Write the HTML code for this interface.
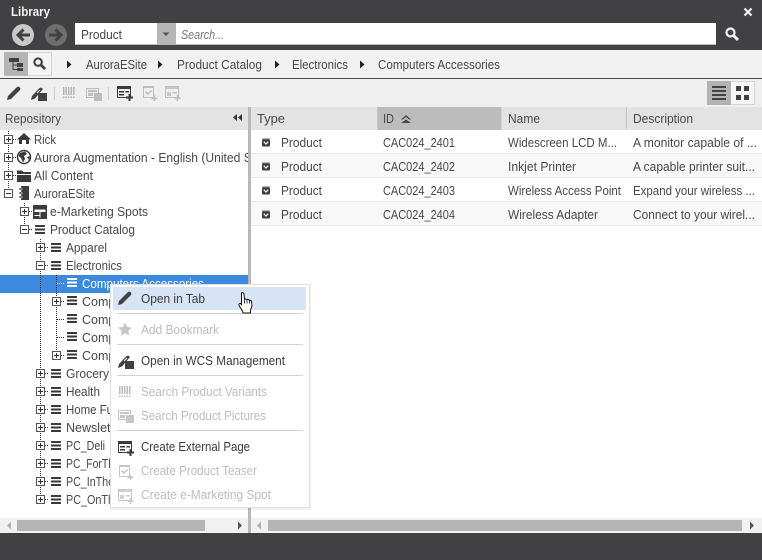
<!DOCTYPE html>
<html><head><meta charset="utf-8"><title>Library</title>
<style>
html,body{margin:0;padding:0;width:762px;height:560px;overflow:hidden;background:#414042}
svg{display:block}
text{font-family:"Liberation Sans",sans-serif;font-size:12.500px;fill:#484848}
.m{fill:#3c3c3c}.d{fill:#bdbdbd}
</style></head><body>
<svg width="762" height="560" viewBox="0 0 762 560" xmlns="http://www.w3.org/2000/svg">
<defs>
<clipPath id="tc"><rect x="0" y="130" width="248" height="388"/></clipPath>
<symbol id="pen" viewBox="0 0 14 14" overflow="visible"><path d="M0 14 L1 10 L9.500 1.500 Q11 0 12.500 1.200 L13 1.800 Q14 3 12.500 4.500 L4 13 Z" fill="currentColor"/></symbol>
<symbol id="penbox" viewBox="0 0 16 16" overflow="visible"><path d="M0 15 L1 11 L8 3.500 Q9.500 2 11 3 L12 4 L4 13.500 Z" fill="currentColor"/><rect x="7" y="8" width="9" height="8" fill="currentColor"/><path d="M6 8 L9 5" stroke="#fff" stroke-width="1"/></symbol>
<symbol id="bars" viewBox="0 0 10 9" overflow="visible"><path d="M0 0h10v2H0zM0 3.500h10v2H0zM0 7h10v2H0z" fill="currentColor"/></symbol>
<symbol id="plus" viewBox="0 0 9 9" overflow="visible"><rect x=".5" y=".5" width="8" height="8" fill="#fff" stroke="#555"/><path d="M2 4.500h5M4.500 2v5" stroke="#333"/></symbol>
<symbol id="minus" viewBox="0 0 9 9" overflow="visible"><rect x=".5" y=".5" width="8" height="8" fill="#fff" stroke="#555"/><path d="M2 4.500h5" stroke="#333"/></symbol>
<symbol id="barcode" viewBox="0 0 13 12" overflow="visible"><path d="M0 0h1.500v8H0zM2.500 0H4v8H2.500zM5 0h1.500v8H5zM7.500 0H9v8H7.500zM10 0h1.500v8H10zM0 9.500h1.500V11H0zM2.500 9.500H4V11H2.500zM5 9.500h1.500V11H5zM7.500 9.500H9V11H7.500zM10 9.500h1.500V11H10z" fill="currentColor"/></symbol>
<symbol id="pics" viewBox="0 0 16 14" overflow="visible"><path d="M.5 1.500h12v9H.5z" fill="none" stroke="currentColor"/><path d="M2 3h9v2H2zM2 6h5v3H2z" fill="currentColor"/><rect x="8" y="6" width="8" height="8" fill="currentColor"/></symbol>
<symbol id="page" viewBox="0 0 16 16" overflow="visible"><path d="M.5 2.500h13v10H.5z" fill="none" stroke="currentColor"/><path d="M0 1h14v3H0zM2 6h5v1.500H2zM2 9h5v1.500H2zM8.500 6H12v1.500H8.500z" fill="currentColor"/><path d="M9 12.500h7M12.500 9v7" stroke="currentColor" stroke-width="2"/></symbol>
<symbol id="teaser" viewBox="0 0 16 16" overflow="visible"><path d="M1.500 1.500h10v11h-10z" fill="none" stroke="currentColor"/><path d="M2 1h9v2H2z" fill="currentColor"/><path d="M3.500 6.500l2.500 2.500 3.500-3.500" fill="none" stroke="currentColor" stroke-width="1.500"/><path d="M9.500 13.500h6M12.500 10.500v5.500" stroke="currentColor" stroke-width="1.500"/></symbol>
<symbol id="spot" viewBox="0 0 16 16" overflow="visible"><path d="M.5 1.500h13v11H.5z" fill="none" stroke="currentColor"/><path d="M0 1h14v3H0zM2 7h4v4H2zM7.500 7H12v1.500H7.500z" fill="currentColor" opacity=".8"/><path d="M9.500 13h6M12.500 10v6" stroke="currentColor" stroke-width="1.500"/></symbol>
<symbol id="prod" viewBox="0 0 8 8" overflow="visible"><rect x="0" y="1" width="8" height="7" rx="1" fill="#3f3f3f"/><rect x="0" y="0" width="8" height="1" fill="#777"/><path d="M1.700 3.200 L4 5.500 L6.300 3.200" fill="none" stroke="#fff" stroke-width="1.200"/></symbol>
<symbol id="mag" viewBox="0 0 14 14" overflow="visible"><circle cx="5.500" cy="5.500" r="4" fill="none" stroke="currentColor" stroke-width="2.200"/><path d="M8.500 8.500 L13 13" stroke="currentColor" stroke-width="3"/></symbol>
</defs>

<!-- title bar -->
<rect width="762" height="560" fill="#414042"/>
<text x="11" y="16" style="font-weight:bold;fill:#f4f4f4" textLength="39" lengthAdjust="spacingAndGlyphs">Library</text>
<path d="M744.500 8.500 L751.500 15.500 M751.500 8.500 L744.500 15.500" stroke="#f2f2f2" stroke-width="2.200"/>
<circle cx="23" cy="35" r="11" fill="#c9c9c9"/>
<path d="M30 35H18M23.500 29.500 L18 35 L23.500 40.500" fill="none" stroke="#414042" stroke-width="3"/>
<circle cx="56" cy="35" r="11" fill="#6e6e6e"/>
<path d="M49 35H61M55.500 29.500 L61 35 L55.500 40.500" fill="none" stroke="#414042" stroke-width="3"/>
<rect x="75" y="23" width="641" height="22" fill="#bdbdbd"/>
<rect x="75" y="23" width="641" height="21" fill="#fff"/>
<rect x="157" y="23" width="19" height="22" fill="#b5b5b5"/>
<path d="M162.500 32.500h7l-3.500 3.500z" fill="#555"/>
<text x="81" y="39" textLength="41" lengthAdjust="spacingAndGlyphs">Product</text>
<text x="181" y="39" style="font-style:italic;fill:#777" textLength="43" lengthAdjust="spacingAndGlyphs">Search...</text>
<use href="#mag" x="725" y="27" width="14" height="14" color="#f2f2f2"/>

<!-- breadcrumb -->
<rect y="50" width="762" height="28" fill="#f1f1f1"/>
<rect y="78" width="762" height="1" fill="#4a4a4a"/>
<rect x="4.500" y="52.500" width="47" height="23" fill="#f3f3f3" stroke="#d4d4d4"/>
<rect x="4" y="52" width="24" height="24" fill="#b5b5b5"/>
<path d="M9 58h10v4H9zM17 63h6v4h-6zM17 68h6v3h-6z" fill="#414042"/><path d="M13 62v7.500h4M13 65h4" fill="none" stroke="#414042"/>
<use href="#mag" x="33" y="57" width="13" height="13" color="#414042"/>
<path d="M67 60.500l4.500 4-4.500 4zM158 60.500l4.500 4-4.500 4zM275 60.500l4.500 4-4.500 4zM360 60.500l4.500 4-4.500 4z" fill="#222"/>
<text x="86" y="69" textLength="61" lengthAdjust="spacingAndGlyphs">AuroraESite</text>
<text x="177" y="69" textLength="85" lengthAdjust="spacingAndGlyphs">Product Catalog</text>
<text x="292" y="69" textLength="56" lengthAdjust="spacingAndGlyphs">Electronics</text>
<text x="378" y="69" textLength="122" lengthAdjust="spacingAndGlyphs">Computers Accessories</text>

<!-- toolbar -->
<rect y="79" width="762" height="28" fill="#efefef"/>
<use href="#pen" x="7" y="86" width="14" height="14" color="#414042"/>
<use href="#penbox" x="31" y="85" width="16" height="16" color="#414042"/>
<rect x="54" y="87" width="1" height="13" fill="#cfcfcf"/>
<use href="#barcode" x="63" y="87" width="13" height="12" color="#b5b5b5"/>
<use href="#pics" x="86" y="87" width="16" height="14" color="#bdbdbd"/>
<rect x="108" y="87" width="1" height="13" fill="#cfcfcf"/>
<use href="#page" x="117" y="85" width="16" height="16" color="#3a3a3a"/>
<use href="#teaser" x="142" y="85" width="16" height="16" color="#bdbdbd"/>
<use href="#spot" x="165" y="85" width="16" height="16" color="#bdbdbd"/>
<rect x="707.500" y="81.500" width="47" height="23" fill="#f6f6f6" stroke="#d4d4d4"/>
<rect x="707" y="81" width="24" height="24" fill="#b3b3b3"/>
<path d="M712 86h14v2h-14zM712 90h14v2h-14zM712 94h14v2h-14zM712 98h14v2h-14z" fill="#414042"/>
<path d="M736 86h5v5h-5zM744 86h5v5h-5zM736 95h5v5h-5zM744 95h5v5h-5z" fill="#414042"/>

<!-- headers -->
<rect y="107" width="762" height="23" fill="#e3e3e3"/>
<rect x="378" y="107" width="123" height="23" fill="#bcbcbc"/>
<rect x="377" y="107" width="1" height="22" fill="#c4c4c4"/>
<rect x="626" y="107" width="1" height="22" fill="#c4c4c4"/>
<rect x="501" y="107" width="1" height="22" fill="#d5d5d5"/>
<text x="5" y="123" textLength="56" lengthAdjust="spacingAndGlyphs">Repository</text>
<path d="M237 114v7l-4-3.500zM242 114v7l-4-3.500z" fill="#333"/>
<text x="257" y="123" textLength="28" lengthAdjust="spacingAndGlyphs">Type</text>
<text x="383" y="123" textLength="11" lengthAdjust="spacingAndGlyphs">ID</text>
<path d="M401 119.500l5-4.500 5 4.500h-2l-3-2.500-3 2.500zM401 123l5-3.500 5 3.500z" fill="#4a4a4a"/>
<text x="508" y="123" textLength="32" lengthAdjust="spacingAndGlyphs">Name</text>
<text x="633" y="123" textLength="60" lengthAdjust="spacingAndGlyphs">Description</text>

<!-- content -->
<rect y="130" width="762" height="388" fill="#fff"/>
<rect x="251" y="154" width="511" height="24" fill="#f8f8f8"/>
<rect x="251" y="202" width="511" height="24" fill="#f8f8f8"/>
<g fill="#ececec"><rect x="251" y="153" width="511" height="1"/><rect x="251" y="177" width="511" height="1"/><rect x="251" y="201" width="511" height="1"/><rect x="251" y="225" width="511" height="1"/></g>
<use href="#prod" x="262" y="138.500" width="8" height="8"/><use href="#prod" x="262" y="162.500" width="8" height="8"/><use href="#prod" x="262" y="186.500" width="8" height="8"/><use href="#prod" x="262" y="210.500" width="8" height="8"/>
<text x="281" y="147" textLength="41" lengthAdjust="spacingAndGlyphs">Product</text>
<text x="383" y="147" textLength="72" lengthAdjust="spacingAndGlyphs">CAC024_2401</text>
<text x="508" y="147" textLength="109" lengthAdjust="spacingAndGlyphs">Widescreen LCD M...</text>
<text x="633" y="147" textLength="124" lengthAdjust="spacingAndGlyphs">A monitor capable of ...</text>
<text x="281" y="171" textLength="41" lengthAdjust="spacingAndGlyphs">Product</text>
<text x="383" y="171" textLength="72" lengthAdjust="spacingAndGlyphs">CAC024_2402</text>
<text x="508" y="171" textLength="68" lengthAdjust="spacingAndGlyphs">Inkjet Printer</text>
<text x="633" y="171" textLength="122" lengthAdjust="spacingAndGlyphs">A capable printer suit...</text>
<text x="281" y="195" textLength="41" lengthAdjust="spacingAndGlyphs">Product</text>
<text x="383" y="195" textLength="72" lengthAdjust="spacingAndGlyphs">CAC024_2403</text>
<text x="508" y="195" textLength="113" lengthAdjust="spacingAndGlyphs">Wireless Access Point</text>
<text x="633" y="195" textLength="122" lengthAdjust="spacingAndGlyphs">Expand your wireless ...</text>
<text x="281" y="219" textLength="41" lengthAdjust="spacingAndGlyphs">Product</text>
<text x="383" y="219" textLength="72" lengthAdjust="spacingAndGlyphs">CAC024_2404</text>
<text x="508" y="219" textLength="90" lengthAdjust="spacingAndGlyphs">Wireless Adapter</text>
<text x="633" y="219" textLength="122" lengthAdjust="spacingAndGlyphs">Connect to your wirel...</text>

<!-- tree -->
<rect x="0" y="275" width="248" height="18" fill="#3b8ae0"/>
<g stroke="#333" stroke-dasharray="1 1" fill="none">
<path d="M8.500 131V190M24.500 203V226M40.500 239V496M56.500 275V352"/>
<path d="M13 139.500h4M13 157.500h4M13 175.500h4M29 211.500h4M29 229.500h4M45 247.500h4M45 265.500h4M45 373.500h4M45 391.500h4M45 409.500h4M45 427.500h4M45 445.500h4M45 463.500h4M45 481.500h4M45 499.500h4M61 301.500h4M61 355.500h4M57 319.500h8M57 337.500h8"/>
<path d="M57 283.500h8" stroke="#fff"/>
</g>
<use href="#plus" x="4" y="135" width="9" height="9"/><use href="#plus" x="4" y="153" width="9" height="9"/><use href="#plus" x="4" y="171" width="9" height="9"/><use href="#minus" x="4" y="189" width="9" height="9"/>
<use href="#plus" x="20" y="207" width="9" height="9"/><use href="#minus" x="20" y="225" width="9" height="9"/>
<use href="#plus" x="36" y="243" width="9" height="9"/><use href="#minus" x="36" y="261" width="9" height="9"/>
<use href="#plus" x="52" y="297" width="9" height="9"/><use href="#plus" x="52" y="351" width="9" height="9"/>
<use href="#plus" x="36" y="369" width="9" height="9"/><use href="#plus" x="36" y="387" width="9" height="9"/><use href="#plus" x="36" y="405" width="9" height="9"/><use href="#plus" x="36" y="423" width="9" height="9"/><use href="#plus" x="36" y="441" width="9" height="9"/><use href="#plus" x="36" y="459" width="9" height="9"/><use href="#plus" x="36" y="477" width="9" height="9"/><use href="#plus" x="36" y="495" width="9" height="9"/>

<!-- tree icons -->
<path d="M17 139.500 L24 133 L31 139.500 L29 139.500 V144 H26 V140 H22 V144 H19 V139.500 Z" fill="#3a3a3a"/>
<circle cx="24" cy="157" r="6.500" fill="#fff" stroke="#3a3a3a" stroke-width="1.500"/>
<path d="M20 153 L25 151.500 L27 154 L24 156 L25 159 L23 162.500 L21 158 L18.500 156 ZM27 157 L30 156 L29 160 Z" fill="#3a3a3a"/>
<path d="M17 170.500h5l1.500 1.500H31v2H17zM17 175h14v7H17z" fill="#3a3a3a"/>
<path d="M21 186h8v14h-8z" fill="#3a3a3a"/><path d="M19 188h3v2h-3zM19 192h3v2h-3zM19 196h3v2h-3z" fill="#3a3a3a" stroke="#fff" stroke-width=".5"/>
<path d="M33 205h14v14H33z" fill="#3a3a3a"/><path d="M34.500 209.500h11v2.500h-11zM39.500 212h1v5.500h-1zM34.500 215h5v1h-5z" fill="#fff"/>
<use href="#bars" x="35" y="225" width="10" height="9" color="#3a3a3a"/>
<use href="#bars" x="51" y="243" width="10" height="9" color="#3a3a3a"/>
<use href="#bars" x="51" y="261" width="10" height="9" color="#3a3a3a"/>
<use href="#bars" x="67" y="278" width="10" height="9" color="#fff"/>
<use href="#bars" x="67" y="296" width="10" height="9" color="#3a3a3a"/>
<use href="#bars" x="67" y="314" width="10" height="9" color="#3a3a3a"/>
<use href="#bars" x="67" y="332" width="10" height="9" color="#3a3a3a"/>
<use href="#bars" x="67" y="350" width="10" height="9" color="#3a3a3a"/>
<use href="#bars" x="51" y="369" width="10" height="9" color="#3a3a3a"/>
<use href="#bars" x="51" y="387" width="10" height="9" color="#3a3a3a"/>
<use href="#bars" x="51" y="405" width="10" height="9" color="#3a3a3a"/>
<use href="#bars" x="51" y="423" width="10" height="9" color="#3a3a3a"/>
<use href="#bars" x="51" y="441" width="10" height="9" color="#3a3a3a"/>
<use href="#bars" x="51" y="459" width="10" height="9" color="#3a3a3a"/>
<use href="#bars" x="51" y="477" width="10" height="9" color="#3a3a3a"/>
<use href="#bars" x="51" y="495" width="10" height="9" color="#3a3a3a"/>

<!-- tree text -->
<g clip-path="url(#tc)">
<text x="34" y="144" textLength="22" lengthAdjust="spacingAndGlyphs">Rick</text>
<text x="34" y="162" textLength="248" lengthAdjust="spacingAndGlyphs">Aurora Augmentation - English (United States)</text>
<text x="34" y="180" textLength="59" lengthAdjust="spacingAndGlyphs">All Content</text>
<text x="34" y="198" textLength="61" lengthAdjust="spacingAndGlyphs">AuroraESite</text>
<text x="50" y="216" textLength="98" lengthAdjust="spacingAndGlyphs">e-Marketing Spots</text>
<text x="50" y="234" textLength="85" lengthAdjust="spacingAndGlyphs">Product Catalog</text>
<text x="66" y="252" textLength="41" lengthAdjust="spacingAndGlyphs">Apparel</text>
<text x="66" y="270" textLength="56" lengthAdjust="spacingAndGlyphs">Electronics</text>
<text x="82" y="288" style="fill:#fff" textLength="122" lengthAdjust="spacingAndGlyphs">Computers Accessories</text>
<text x="82" y="306">Compu</text>
<text x="82" y="324">Compu</text>
<text x="82" y="342">Compu</text>
<text x="82" y="360">Compu</text>
<text x="66" y="378" textLength="43" lengthAdjust="spacingAndGlyphs">Grocery</text>
<text x="66" y="396" textLength="34" lengthAdjust="spacingAndGlyphs">Health</text>
<text x="66" y="414" textLength="47" lengthAdjust="spacingAndGlyphs">Home Fu</text>
<text x="66" y="432" textLength="48" lengthAdjust="spacingAndGlyphs">Newslett</text>
<text x="66" y="450" textLength="39" lengthAdjust="spacingAndGlyphs">PC_Deli</text>
<text x="66" y="468" textLength="48" lengthAdjust="spacingAndGlyphs">PC_ForTh</text>
<text x="66" y="486" textLength="48" lengthAdjust="spacingAndGlyphs">PC_InThe</text>
<text x="66" y="504" textLength="48" lengthAdjust="spacingAndGlyphs">PC_OnTh</text>
</g>

<!-- splitter + scrollbars -->
<rect x="248" y="107" width="3" height="426" fill="#b8b8b8"/>
<rect y="518" width="248" height="15" fill="#f1f1f1"/>
<rect x="251" y="518" width="511" height="15" fill="#f1f1f1"/>
<rect x="17" y="520" width="188" height="11" fill="#b5b5b5"/>
<rect x="268" y="520" width="474" height="11" fill="#b5b5b5"/>
<path d="M11 521.500v8l-4-4z" fill="#b0b0b0"/>
<path d="M238 521.500v8l4-4z" fill="#555"/>
<path d="M261 521.500v8l-4-4z" fill="#b0b0b0"/>
<path d="M750 521.500v8l4-4z" fill="#555"/>

<!-- context menu -->
<rect x="110" y="285" width="201" height="225" fill="#000" opacity=".05"/>
<rect x="110.500" y="284.500" width="199" height="223" fill="#fff" stroke="#e0e0e0"/>
<rect x="113" y="287" width="193" height="23" fill="#d6e4f6"/>
<g fill="#d2d2d2"><rect x="117" y="313" width="186" height="1"/><rect x="117" y="344" width="186" height="1"/><rect x="117" y="375" width="186" height="1"/><rect x="117" y="430" width="186" height="1"/></g>
<use href="#pen" x="118" y="291" width="14" height="14" color="#414042"/>
<path d="M125 322.500l2 4.500 5 .5-3.700 3.300 1 5-4.300-2.600-4.300 2.600 1-5-3.700-3.300 5-.5z" fill="#c6c6c6"/>
<use href="#penbox" x="118" y="353" width="16" height="16" color="#414042"/>
<use href="#barcode" x="119" y="386" width="13" height="12" color="#bdbdbd"/>
<use href="#pics" x="118" y="409" width="16" height="14" color="#c6c6c6"/>
<use href="#page" x="118" y="440" width="16" height="16" color="#3a3a3a"/>
<use href="#teaser" x="118" y="464" width="16" height="16" color="#c6c6c6"/>
<use href="#spot" x="118" y="488" width="16" height="16" color="#c6c6c6"/>
<text x="141" y="303" class="m" textLength="64" lengthAdjust="spacingAndGlyphs">Open in Tab</text>
<text x="141" y="334" class="d" textLength="78" lengthAdjust="spacingAndGlyphs">Add Bookmark</text>
<text x="141" y="365" class="m" textLength="144" lengthAdjust="spacingAndGlyphs">Open in WCS Management</text>
<text x="141" y="396" class="d" textLength="126" lengthAdjust="spacingAndGlyphs">Search Product Variants</text>
<text x="141" y="420" class="d" textLength="125" lengthAdjust="spacingAndGlyphs">Search Product Pictures</text>
<text x="141" y="451" class="m" textLength="109" lengthAdjust="spacingAndGlyphs">Create External Page</text>
<text x="141" y="475" class="d" textLength="116" lengthAdjust="spacingAndGlyphs">Create Product Teaser</text>
<text x="141" y="499" class="d" textLength="130" lengthAdjust="spacingAndGlyphs">Create e-Marketing Spot</text>

<!-- hand cursor -->
<path d="M241.500 293 Q243.500 292 244 294 L244.500 299 L248 299.500 L251.500 301 L252 306 L250.500 310 L250.500 313 L243 313 L242.500 311 L239 305.500 Q238.500 303.500 240.500 303.500 L241.500 304.500 Z" fill="#fff" stroke="#111" stroke-width="1"/>
<path d="M244.500 299v4.500M247 300v3.500M249.500 300.500v3" stroke="#111" stroke-width=".8"/>
</svg>
</body></html>
